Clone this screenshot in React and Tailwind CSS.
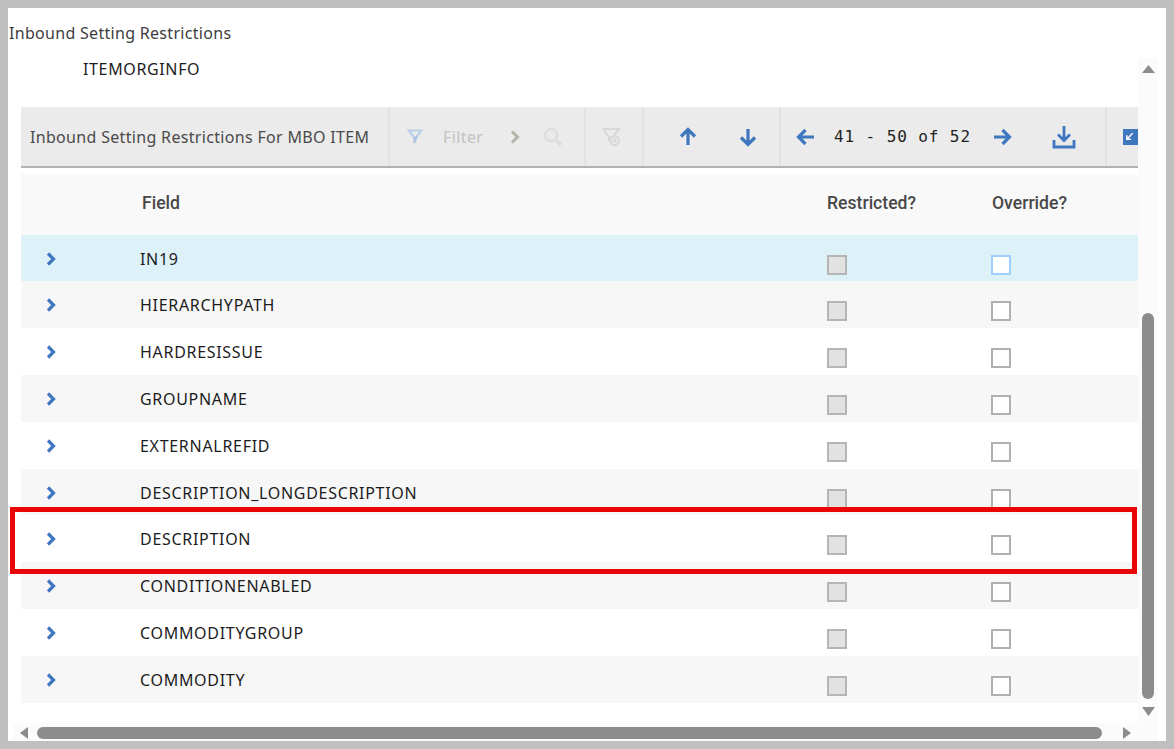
const rows = [
  ["IN19", "bg-[#ddf1f9]", true, "h-[46px]"],
  ["HIERARCHYPATH", "bg-[#f7f7f7]", false, "h-[47px]"],
  ["HARDRESISSUE", "bg-white", false, "h-[47px]"],
  ["GROUPNAME", "bg-[#f7f7f7]", false, "h-[47px]"],
  ["EXTERNALREFID", "bg-white", false, "h-[47px]"],
  ["DESCRIPTION_LONGDESCRIPTION", "bg-[#f7f7f7]", false, "h-[46px]"],
  ["DESCRIPTION", "bg-white", false, "h-[47px]"],
  ["CONDITIONENABLED", "bg-[#f7f7f7]", false, "h-[47px]"],
  ["COMMODITYGROUP", "bg-white", false, "h-[47px]"],
  ["COMMODITY", "bg-[#f7f7f7]", false, "h-[47px]"],
];

const Arrow = ({ d, className }) => (
  <svg viewBox="0 0 20 20" className={`shrink-0 ${className}`} fill="none" stroke="#3e76bf" strokeWidth="3.2" strokeLinecap="butt" strokeLinejoin="miter">
    <path d={d} />
  </svg>
);

const Chevron = () => (
  <svg viewBox="0 0 10 14" className="w-[10px] h-[14px]" fill="none" stroke="#3e76bf" strokeWidth="3.2">
    <path d="M2 1.5 L7.5 7 L2 12.5" />
  </svg>
);

function Row({ name, bg, active, h }) {
  return (
    <div className={`flex ${h} ${bg}`}>
      <div className="w-[119px] pl-[25px] pt-[17px] shrink-0"><Chevron /></div>
      <div className="w-[687px] shrink-0 pt-[12px] text-[16px] leading-[24px] text-[#1c1c1c] tracking-[0.7px]">{name}</div>
      <div className="w-[164px] shrink-0 pt-[20px]">
        <div className="w-[20px] h-[20px] border-2 border-[#b5b5b5] bg-[#e2e2e2]" />
      </div>
      <div className="pt-[20px]">
        <div className={`w-[20px] h-[20px] border-2 bg-white ${active ? "border-[#9fd0fb]" : "border-[#b0b0b0]"}`} />
      </div>
    </div>
  );
}

function Sep() {
  return <div className="w-[2px] h-full bg-[#e2e2e2] shrink-0" />;
}

export default function App() {
  return (
    <div className="relative w-[1174px] h-[749px] overflow-hidden border-8 border-[#bfbfbf] bg-white font-['Noto_Sans',sans-serif]">
      <div className="h-[50px] pl-px pt-[13px] text-[16px] leading-[24px] text-[#3d3d3d] tracking-[0.3px]">Inbound Setting Restrictions</div>
      <div className="flex h-[665px]">
        <div className="w-[1130px] shrink-0 overflow-hidden">
          <div className="pl-[75px] h-[49px] text-[16px] leading-[22px] text-[#1c1c1c] tracking-[0.64px]">ITEMORGINFO</div>
          <div className="ml-[13px] w-[1117px]">
            <div className="flex items-center h-[61px] bg-[#ebebeb] border-b-2 border-[#b3b3b3] overflow-hidden">
              <div className="w-[367px] pl-[9px] shrink-0 text-[16px] text-[#4a4a4a] whitespace-nowrap tracking-[0.32px]">Inbound Setting Restrictions For MBO ITEM</div>
              <Sep />
              <div className="w-[194px] shrink-0 flex items-center pl-[17px]">
                <svg viewBox="0 0 16 16" className="w-[16px] h-[16px] shrink-0" fill="none" stroke="#b9cde6" strokeWidth="2">
                  <path d="M1.5 1.5 H14.5 L9.5 7.5 L7.5 14 L6.5 7.5 Z" />
                  <path d="M7 8 L11 7 L8 14 Z" fill="#a9c2e2" stroke="none" />
                </svg>
                <span className="ml-[20px] text-[16px] text-[#c2c2c2] tracking-[0.4px]">Filter</span>
                <svg viewBox="0 0 10 14" className="w-[10px] h-[14px] ml-[27px] shrink-0" fill="none" stroke="#b5b2a8" strokeWidth="3"><path d="M2 1.5 L7.5 7 L2 12.5" /></svg>
                <svg viewBox="0 0 20 20" className="w-[20px] h-[20px] ml-[23px] shrink-0" fill="none" stroke="#dcdcdc" strokeWidth="2.4"><circle cx="8" cy="8" r="6" /><path d="M13 13 L18 18" strokeWidth="3.6" /></svg>
              </div>
              <Sep />
              <div className="w-[56px] shrink-0 pl-[15px]">
                <svg viewBox="0 0 20 20" className="w-[20px] h-[20px]" fill="none" stroke="#d8d8d8" strokeWidth="2"><path d="M2 2 H18 L13 8 M2 2 L8 10 V14" /><circle cx="13.5" cy="13.5" r="4.5" /><path d="M11.5 11.5 L15.5 15.5 M15.5 11.5 L11.5 15.5" strokeWidth="1.4" /></svg>
              </div>
              <Sep />
              <div className="w-[135px] shrink-0 flex items-center pl-[34px] gap-[40px]">
                <Arrow className="w-[20px] h-[20px]" d="M10 18 V3 M3 9.5 L10 2.5 L17 9.5" />
                <Arrow className="w-[20px] h-[20px]" d="M10 2 V17 M3 10.5 L10 17.5 L17 10.5" />
              </div>
              <Sep />
              <div className="w-[324px] shrink-0 flex items-center pl-[15px]">
                <Arrow className="w-[20px] h-[20px]" d="M18 10 H3 M9.5 3 L2.5 10 L9.5 17" />
                <span className="ml-[18px] w-[136px] shrink-0 font-['DejaVu_Sans_Mono',monospace] text-[16px] leading-[20px] whitespace-pre tracking-[0.9px] text-[#222]">41 - 50 of 52</span>
                <Arrow className="w-[20px] h-[20px] ml-[22px]" d="M2 10 H17 M10.5 3 L17.5 10 L10.5 17" />
                <svg viewBox="0 0 24 24" className="w-[24px] h-[24px] ml-[40px] shrink-0" fill="none" stroke="#3e76bf" strokeWidth="2.8">
                  <path d="M12 1 V15 M6 9.5 L12 15.5 L18 9.5" /><path d="M2 15 V22 H22 V15" />
                </svg>
              </div>
              <Sep />
              <div className="pl-[16px] shrink-0">
                <div className="w-[16px] h-[16px] bg-[#3e76bf] flex items-center justify-start pl-[2px]">
                  <svg viewBox="0 0 10 10" className="w-[9px] h-[9px]" fill="none" stroke="#fff" strokeWidth="1.6"><path d="M8.5 1.5 L2.5 7.5 M2 3.5 V8 H6.5" /></svg>
                </div>
              </div>
            </div>
            <div className="mt-[6px] flex h-[61px] items-center pb-[2px] bg-[#f9f9f9] text-[17.6px] font-medium text-[#484848] font-['Roboto',sans-serif]">
              <div className="w-[121px] shrink-0" />
              <div className="w-[685px] shrink-0">Field</div>
              <div className="w-[165px] shrink-0">Restricted?</div>
              <div>Override?</div>
            </div>
            <div>
              {rows.map(([n, b, a, h]) => <Row key={n} name={n} bg={b} active={a} h={h} />)}
            </div>
          </div>
        </div>
        <div className="w-[20px] h-[665px] shrink-0 bg-[#fbfbfb] flex flex-col items-center">
          <svg viewBox="0 0 13 8" className="w-[13px] h-[8px] mt-[7px] shrink-0" fill="#8c8c8c"><path d="M6.5 0 L13 8 H0 Z" /></svg>
          <div className="mt-[240px] w-[12px] h-[386px] shrink-0 rounded-full bg-[#8c8c8c]" />
          <svg viewBox="0 0 13 9" className="w-[13px] h-[9px] mt-[8px] shrink-0" fill="#8c8c8c"><path d="M6.5 9 L13 0 H0 Z" /></svg>
        </div>
      </div>
      <div className="ml-[5px] w-[1145px] h-[18px] bg-[#fbfbfb] flex items-start pt-[4px]">
        <svg viewBox="0 0 8 12" className="w-[10px] h-[12px] ml-[6px] shrink-0" fill="#8c8c8c"><path d="M0 6 L8 0 V12 Z" /></svg>
        <div className="ml-[8px] w-[1065px] h-[12px] shrink-0 rounded-full bg-[#8c8c8c]" />
        <svg viewBox="0 0 8 12" className="w-[10px] h-[12px] ml-[20px] shrink-0" fill="#8c8c8c"><path d="M8 6 L0 0 V12 Z" /></svg>
      </div>
      <div className="absolute left-[2px] top-[499px] w-[1127px] h-[67px] border-[5px] border-[#e90606]" />
    </div>
  );
}
